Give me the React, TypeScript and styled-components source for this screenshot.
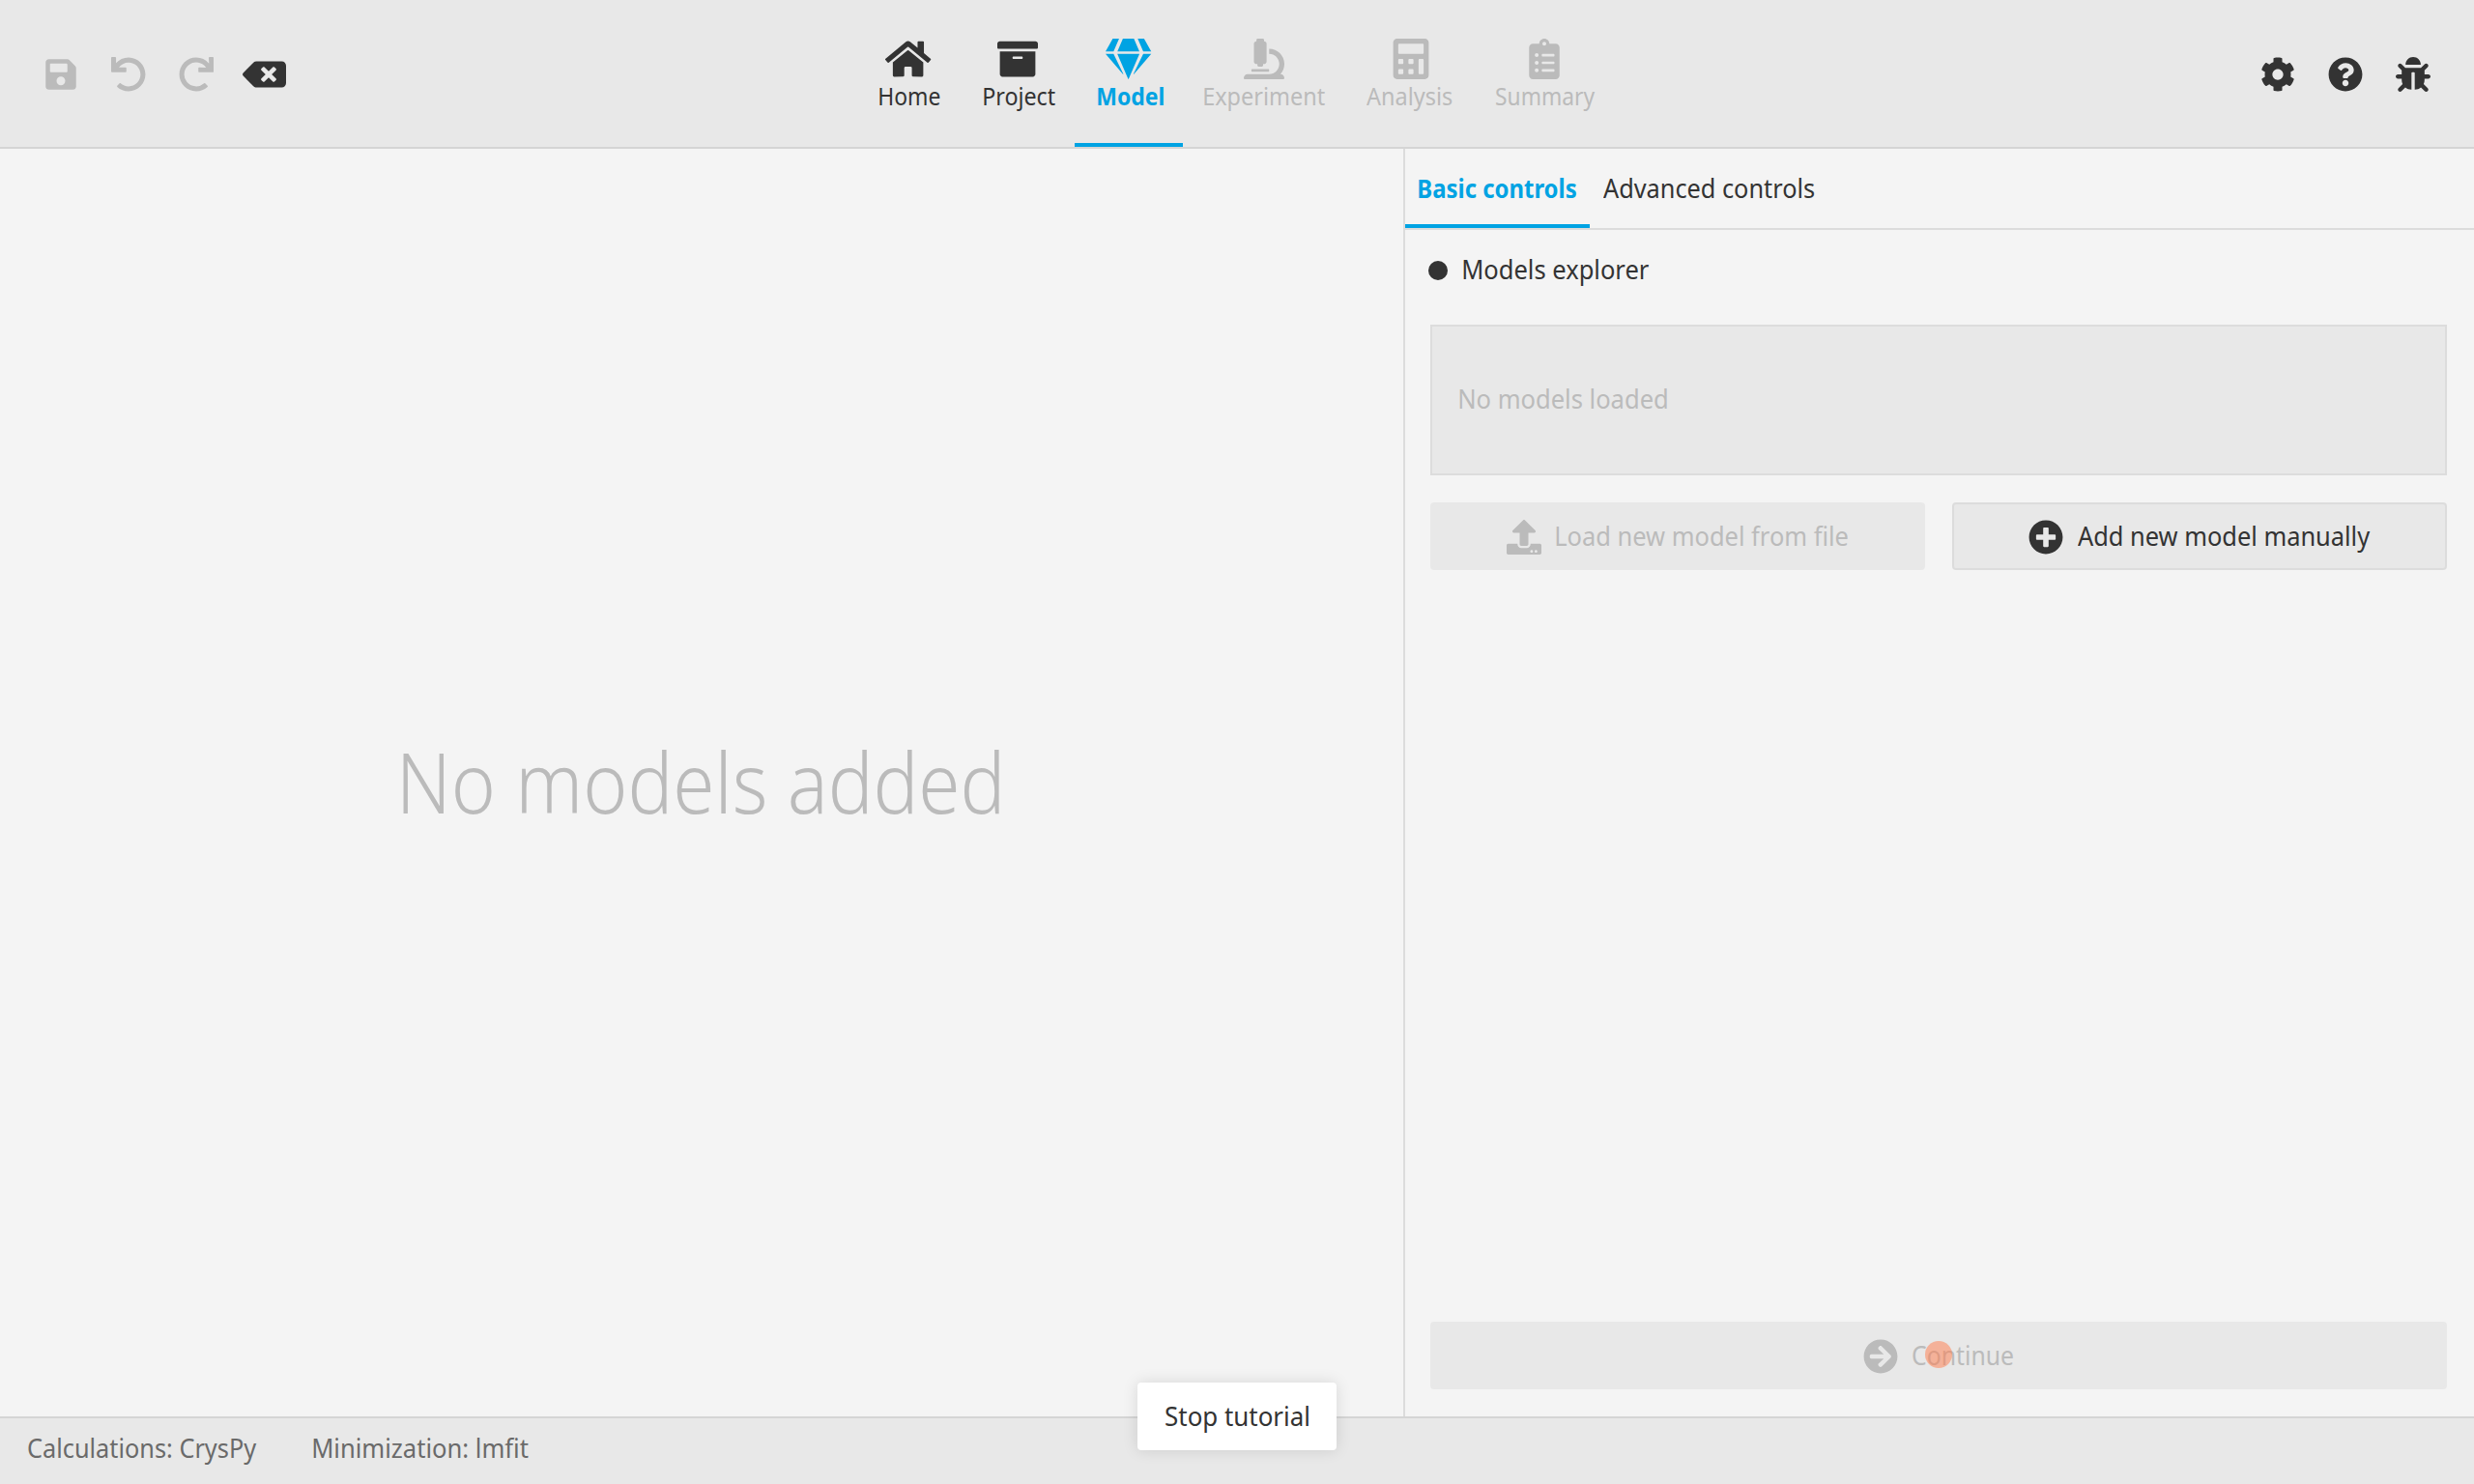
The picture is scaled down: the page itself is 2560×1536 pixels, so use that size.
import React, { useMemo } from 'react';
import styled, { createGlobalStyle, css } from 'styled-components';
import type { IconType } from 'react-icons';
import {
  FaSave, FaUndo, FaRedo, FaBackspace, FaHome, FaArchive, FaGem, FaMicroscope,
  FaCalculator, FaClipboardList, FaCog, FaQuestionCircle, FaBug, FaUpload,
  FaPlusCircle, FaArrowCircleRight,
} from 'react-icons/fa';

const color = {
  page: '#f4f4f4',
  bar: '#e8e8e8',
  barLine: '#d5d5d5',
  line: '#dcdcdc',
  text: '#333333',
  footer: '#6a6a6a',
  disabled: '#bbbbbb',
  accent: '#00a3e3',
};

const FONT = '"Noto Sans", "Open Sans", sans-serif';

const GlobalStyle = createGlobalStyle`
  *, *::before, *::after { box-sizing: border-box; }
  body { margin: 0; background: ${color.page}; color: ${color.text}; font-family: ${FONT}; }
  button { font: inherit; color: inherit; border: 0; background: none; padding: 0; margin: 0; }
`;

/* ---------- condensed text ---------- */

const TextBox = styled.span<{ $width: number; $size: number; $weight: number }>`
  display: block;
  flex: none;
  width: ${p => p.$width}px;
  font-family: ${FONT};
  font-size: ${p => p.$size}px;
  font-weight: ${p => p.$weight};
  line-height: ${p => Math.round(p.$size * 1.3)}px;
  white-space: nowrap;
`;

const Glyphs = styled.span`
  display: block;
  width: max-content;
  transform-origin: 0 50%;
`;

type TextProps = { children: string; width: number; size?: number; weight?: number };

/** Sets a label in a condensed width, so that its glyphs fill exactly `width` pixels. */
function Text({ children, width, size = 27.5, weight = 400 }: TextProps) {
  const transform = useMemo(() => {
    const ctx = document.createElement('canvas').getContext('2d');
    if (!ctx) return undefined;
    ctx.font = `${weight} ${size}px ${FONT}`;
    const m = ctx.measureText(children);
    const ink = m.actualBoundingBoxLeft + m.actualBoundingBoxRight;
    return `scaleX(${width / ink}) translateX(${m.actualBoundingBoxLeft}px)`;
  }, [children, width, size, weight]);
  return (
    <TextBox $width={width} $size={size} $weight={weight}>
      <Glyphs style={{ transform }}>{children}</Glyphs>
    </TextBox>
  );
}

/* ---------- frame ---------- */

const Window = styled.div`
  display: grid;
  grid-template-rows: 154px 1fr 70px;
  height: 1536px;
  width: 2560px;
  overflow: hidden;
`;

/* Icons share one height; `wide` is the width in units of a 512-unit em. */
const iconSize = (px: number, wide = 512) => css`
  svg { display: block; flex: none; height: ${px}px; width: ${(px * wide) / 512}px; }
`;

/* ---------- header ---------- */

const Header = styled.header`
  display: grid;
  grid-template-columns: 858px 1fr 210px;
  padding: 0 28px;
  background: ${color.bar};
  border-bottom: 2px solid ${color.barLine};
`;

const ToolGroup = styled.div`
  display: flex;
  align-items: center;
  padding-top: 1px;
`;

const ToolButton = styled.button<{ $off?: boolean; $wide?: number }>`
  display: flex;
  align-items: center;
  justify-content: center;
  width: 70px;
  height: 70px;
  color: ${p => (p.$off ? color.disabled : color.text)};
  ${p => iconSize(36, p.$wide)}
`;

const Nav = styled.nav`
  display: flex;
`;

const NavTab = styled.button<{ $width: number; $state: 'on' | 'off' | 'idle'; $wide?: number }>`
  display: flex;
  flex-direction: column;
  align-items: center;
  gap: 1px;
  width: ${p => p.$width}px;
  height: 152px;
  padding-top: 40px;
  border-bottom: 4px solid ${p => (p.$state === 'on' ? color.accent : 'transparent')};
  color: ${p => ({ on: color.accent, off: color.disabled, idle: color.text })[p.$state]};
  ${p => iconSize(42, p.$wide)}
`;

const NavLabel = styled.span<{ $nudge: number }>`
  margin-left: ${p => p.$nudge * 2}px;
`;

type NavItem = {
  name: string; icon: IconType; width: number; text: number; nudge: number;
  state: 'on' | 'off' | 'idle'; wide?: number;
};

const navTabs: NavItem[] = [
  { name: 'Home', icon: FaHome, width: 108, text: 63, nudge: 1, state: 'idle', wide: 576 },
  { name: 'Project', icon: FaArchive, width: 118, text: 74, nudge: 1.5, state: 'idle' },
  { name: 'Model', icon: FaGem, width: 112, text: 68, nudge: 1.5, state: 'on', wide: 576 },
  { name: 'Experiment', icon: FaMicroscope, width: 168, text: 125, nudge: 0.5, state: 'off' },
  { name: 'Analysis', icon: FaCalculator, width: 136, text: 89, nudge: -1.25, state: 'off' },
  { name: 'Summary', icon: FaClipboardList, width: 140, text: 102, nudge: 0.5, state: 'off' },
];

/* ---------- main ---------- */

const Main = styled.main`
  display: grid;
  grid-template-columns: 1452px 1fr;
`;

const Canvas = styled.section`
  display: flex;
  align-items: center;
  justify-content: center;
  padding: 0 2px 4px 0;
  color: ${color.disabled};
`;

const Side = styled.aside`
  display: flex;
  flex-direction: column;
  border-left: 2px solid ${color.line};
`;

const SideTabs = styled.div`
  display: flex;
  height: 84px;
  border-bottom: 2px solid ${color.line};
`;

const SideTab = styled.button<{ $active?: boolean; $width: number }>`
  display: flex;
  align-items: center;
  justify-content: center;
  width: ${p => p.$width}px;
  height: 82px;
  border-bottom: 4px solid ${p => (p.$active ? color.accent : 'transparent')};
  padding-top: 4px;
  color: ${p => (p.$active ? color.accent : color.text)};
`;

const SideBody = styled.div`
  display: flex;
  flex: 1;
  flex-direction: column;
  padding: 0 28px 28px 26px;
`;

const GroupTitle = styled.div`
  display: flex;
  align-items: center;
  gap: 15px;
  height: 84px;
  margin-left: -2px;

  ${TextBox} { margin: 0 0 2px 0.5px; }
`;

const Dot = styled.i`
  width: 20px;
  height: 20px;
  border-radius: 50%;
  background: ${color.text};
`;

const ModelsTable = styled.div`
  display: flex;
  align-items: center;
  height: 156px;
  margin: 14px 0 28px;
  padding: 0 0 2px 27.5px;
  border: 2px solid ${color.line};
  background: ${color.bar};
  color: ${color.disabled};
`;

const ButtonRow = styled.div`
  display: grid;
  grid-template-columns: 1fr 1fr;
  gap: 28px;
`;

const ActionButton = styled.button<{ $off?: boolean }>`
  display: flex;
  align-items: center;
  justify-content: center;
  gap: 15px;
  height: 70px;
  border-radius: 4px;
  border: 2px solid ${p => (p.$off ? color.bar : color.line)};
  background: ${color.bar};
  color: ${p => (p.$off ? color.disabled : color.text)};
  ${iconSize(36)}

  svg { margin: 1px 0 0 -1px; }
`;

const Spacer = styled.div`
  flex: 1;
`;

const ContinueWrap = styled.div`
  position: relative;
  display: grid;
`;

const Pointer = styled.i`
  position: absolute;
  left: 512px;
  top: 20px;
  width: 28px;
  height: 28px;
  border-radius: 50%;
  background: rgba(255, 127, 80, 0.52);
`;

/* ---------- footer ---------- */

const Footer = styled.footer`
  position: relative;
  display: flex;
  align-items: center;
  gap: 58px;
  padding: 0 0 6px 29px;
  background: ${color.bar};
  border-top: 2px solid ${color.barLine};
  color: ${color.footer};
`;

const StopTutorial = styled.button`
  position: absolute;
  left: 1177px;
  top: -37px;
  display: flex;
  align-items: center;
  justify-content: center;
  width: 206px;
  height: 70px;
  border-radius: 4px;
  background: #ffffff;
  color: ${color.text};
  box-shadow: 0 0 16px rgba(0, 0, 0, 0.12);
`;

export default function App() {
  return (
    <Window>
      <GlobalStyle />
      <Header>
        <ToolGroup>
          <ToolButton $off><FaSave /></ToolButton>
          <ToolButton $off><FaUndo /></ToolButton>
          <ToolButton $off><FaRedo /></ToolButton>
          <ToolButton $wide={640}><FaBackspace /></ToolButton>
        </ToolGroup>
        <Nav>
          {navTabs.map(({ name, icon: Icon, width, text, nudge, state, wide }) => (
            <NavTab key={name} $width={width} $state={state} $wide={wide}>
              <Icon />
              <NavLabel $nudge={nudge}>
                <Text width={text} size={25.5} weight={state === 'on' ? 700 : 400}>{name}</Text>
              </NavLabel>
            </NavTab>
          ))}
        </Nav>
        <ToolGroup>
          <ToolButton><FaCog /></ToolButton>
          <ToolButton><FaQuestionCircle /></ToolButton>
          <ToolButton><FaBug /></ToolButton>
        </ToolGroup>
      </Header>

      <Main>
        <Canvas>
          <Text width={617} size={87} weight={300}>No models added</Text>
        </Canvas>
        <Side>
          <SideTabs>
            <SideTab $active $width={191}><Text width={163} weight={700}>Basic controls</Text></SideTab>
            <SideTab $width={246}><Text width={218}>Advanced controls</Text></SideTab>
          </SideTabs>
          <SideBody>
            <GroupTitle>
              <Dot />
              <Text width={192}>Models explorer</Text>
            </GroupTitle>
            <ModelsTable><Text width={215}>No models loaded</Text></ModelsTable>
            <ButtonRow>
              <ActionButton $off>
                <FaUpload />
                <Text width={302.5}>Load new model from file</Text>
              </ActionButton>
              <ActionButton>
                <FaPlusCircle />
                <Text width={303}>Add new model manually</Text>
              </ActionButton>
            </ButtonRow>
            <Spacer />
            <ContinueWrap>
              <ActionButton $off>
                <FaArrowCircleRight />
                <Text width={104.5}>Continue</Text>
              </ActionButton>
              <Pointer />
            </ContinueWrap>
          </SideBody>
        </Side>
      </Main>

      <Footer>
        <Text width={237}>Calculations: CrysPy</Text>
        <Text width={223}>Minimization: lmfit</Text>
        <StopTutorial><Text width={148}>Stop tutorial</Text></StopTutorial>
      </Footer>
    </Window>
  );
}
